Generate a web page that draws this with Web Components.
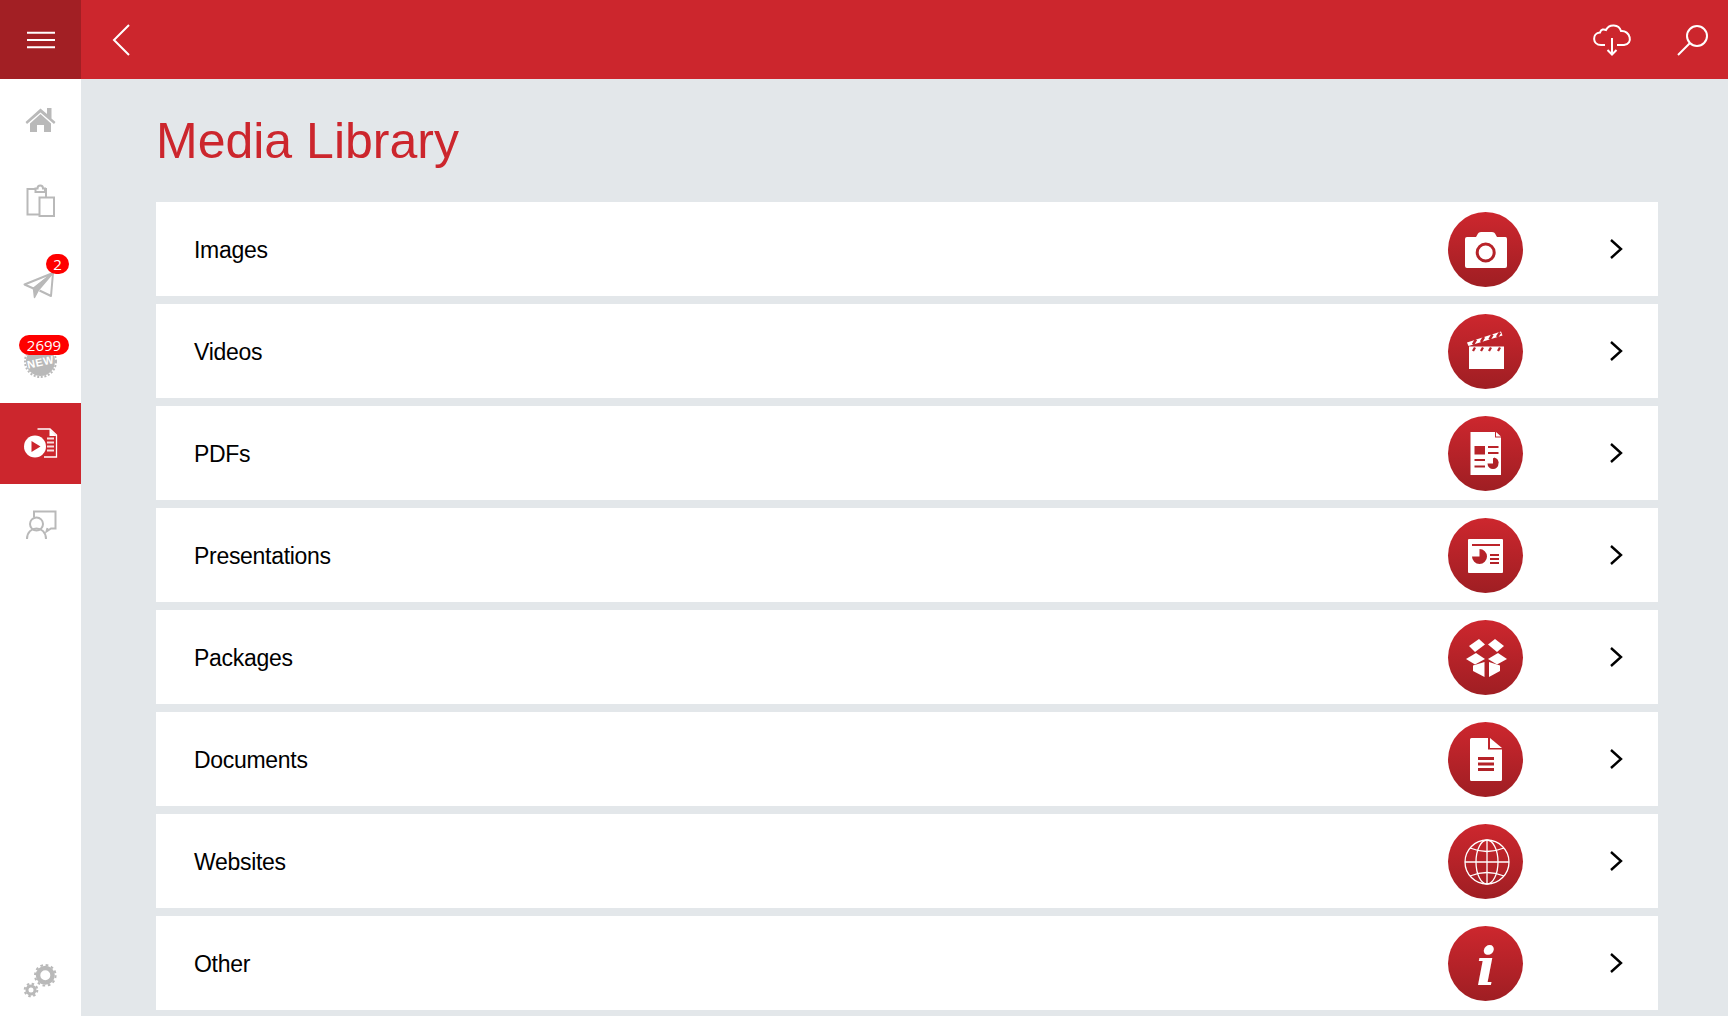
<!DOCTYPE html>
<html lang="en">
<head>
<meta charset="utf-8">
<title>Media Library</title>
<style>
  html, body { margin: 0; height: 100%; overflow: hidden; }
  body { font-family: "Liberation Sans", Arial, sans-serif; }
</style>
</head>
<body>
<svg width="0" height="0" style="position:absolute" aria-hidden="true">
  <defs>
    <linearGradient id="disc" gradientUnits="userSpaceOnUse" x1="0" y1="0" x2="0" y2="75">
      <stop offset="0" stop-color="#cd272e"/>
      <stop offset="1" stop-color="#9f1e23"/>
    </linearGradient>
  </defs>
</svg>

<app-shell>
  <top-bar slot="top"></top-bar>

  <side-nav slot="side">
    <nav-item>
      <svg viewBox="0 0 81 81" width="81" height="81" fill="currentColor">
        <path d="M40.500 29.500 47 35V29H51.500V39.500L55.500 43 54 45 40.500 33.500 27 45 25.500 43z"/>
        <path d="M40.500 35 51 44.500V53H44V46H37V53H30V44.500z"/>
      </svg>
    </nav-item>
    <nav-item>
      <svg viewBox="0 0 81 81" width="81" height="81" fill="none" stroke="currentColor" stroke-width="2">
        <path d="M35 29H27.500V54.500H39M46 37V29H45"/>
        <path d="M35.500 32V28.500H37.500C37.500 24.500 43 24.500 43 28.500H45V32z"/>
        <path d="M39.500 37.500H54V56H39.500z"/>
      </svg>
    </nav-item>
    <nav-item badge="2">
      <svg viewBox="0 0 81 81" width="81" height="81" fill="none" stroke="currentColor" stroke-width="2" stroke-linejoin="round">
        <path d="M53 32 24.500 43.500 33.500 47.500 53 32 51 55 39.500 49.500"/>
        <path fill="currentColor" stroke-width="1.500" d="M33.500 47.500 53 32 38.500 49 34.500 56.500z"/>
      </svg>
    </nav-item>
    <nav-item badge="2699">
      <svg viewBox="0 0 81 81" width="81" height="81">
        <circle cx="40.500" cy="39.500" r="14.500" fill="currentColor"/>
        <circle cx="40.500" cy="39.500" r="15.500" fill="none" stroke="currentColor" stroke-width="2" stroke-dasharray="2 1.650"/>
        <text x="40.500" y="44" transform="rotate(-12 40.500 40)" text-anchor="middle" font-family="'Liberation Sans', sans-serif" font-weight="700" font-size="11" fill="#fff" letter-spacing=".5">NEW</text>
      </svg>
    </nav-item>
    <nav-item active>
      <svg viewBox="0 0 81 81" width="81" height="81">
        <path fill="none" stroke="currentColor" stroke-width="1.300" d="M37.500 26H50L56.500 32V54H44"/>
        <path fill="currentColor" d="M49.500 26 56.500 33H49.500z"/>
        <path fill="currentColor" d="M47 34.500h7v2h-7zM47 38.500h7v2h-7zM47 42.500h7v2h-7zM47 46.500h7v2h-7z" opacity=".85"/>
        <circle cx="35" cy="43.500" r="11" fill="currentColor"/>
        <path d="M31.500 38 40.500 43.500 31.500 49z" fill="#cc262d"/>
      </svg>
    </nav-item>
    <nav-item>
      <svg viewBox="0 0 81 81" width="81" height="81" fill="none" stroke="currentColor" stroke-width="2">
        <circle cx="36.500" cy="40" r="6.500"/>
        <path d="M27 55C27 41 46 41 46 55"/>
        <path d="M34 33V27.500H55.500V44.500H51L46.500 47.500 47.500 44"/>
      </svg>
    </nav-item>
    <nav-item class="bottom">
      <svg viewBox="0 0 81 81" width="81" height="81" fill="none" stroke="currentColor">
        <circle cx="45.300" cy="40.300" r="7.250" stroke-width="4.500"/>
        <circle cx="45.300" cy="40.300" r="10.300" stroke-width="2" stroke-dasharray="2.700 2.700"/>
        <circle cx="31" cy="55" r="4" stroke-width="3"/>
        <circle cx="31" cy="55" r="6.300" stroke-width="2" stroke-dasharray="2.470 2.470"/>
      </svg>
    </nav-item>
  </side-nav>

  <media-library slot="main" heading="Media Library">
    <media-row>Images
      <svg slot="icon" viewBox="0 0 75 75" width="75" height="75">
        <path fill="#fff" d="M19 25H28L30 21.500Q30.500 20 33 20H44Q46.500 20 47 21.500L49 25H57.500Q59 25 59 27V54Q59 56 57 56H19Q17 56 17 54V27Q17 25 19 25z"/>
        <circle cx="37.700" cy="40.500" r="8.500" fill="#fff" stroke="url(#disc)" stroke-width="3"/>
      </svg>
    </media-row>
    <media-row>Videos
      <svg slot="icon" viewBox="0 0 75 75" width="75" height="75">
        <path fill="#fff" d="M21 32.500H56V55H21z"/>
        <path stroke="url(#disc)" stroke-width="2.300" d="M25 37 27 33.500M33 37 35 33.500M41 37 43 33.500M50 37 52 33.500" fill="none"/>
        <path fill="#fff" d="M19 28.500 53 17.500 54.500 21.500 20.500 32z"/>
        <path fill="none" stroke="url(#disc)" stroke-width="2.500" d="M25 30.500 28 25.500M33 28 36 23M41.500 25.500 44.500 20.500M49 23 52 18.500"/>
      </svg>
    </media-row>
    <media-row>PDFs
      <svg slot="icon" viewBox="0 0 75 75" width="75" height="75">
        <path fill="#fff" d="M22.500 16H47V21.500H53V59H22.500z"/>
        <path fill="#fff" d="M48 16 53 20.500H48z"/>
        <path fill="url(#disc)" d="M26.500 30H37V38.500H26.500zM40 30H50.500V32H40zM40 36H50.500V38H40zM26.500 43H37V45H26.500zM26.500 49.500H37V51.500H26.500z"/>
        <path fill="url(#disc)" d="M45 42A5.500 5.500 0 1 1 39.500 47.500H45z"/>
        <path fill="url(#disc)" d="M46 41.500A5.500 5.500 0 0 1 50.500 47H46z"/>
      </svg>
    </media-row>
    <media-row>Presentations
      <svg slot="icon" viewBox="0 0 75 75" width="75" height="75">
        <rect x="20" y="21" width="35" height="34" rx="1" fill="#fff"/>
        <path fill="url(#disc)" d="M24 26H52V28H24zM42 36H51V38H42zM42 40H51V42H42zM42 44H51V46H42z"/>
        <path fill="url(#disc)" d="M31.500 31A7.500 7.500 0 1 1 24 38.500H31.500z"/>
      </svg>
    </media-row>
    <media-row>Packages
      <svg slot="icon" viewBox="0 0 75 75" width="75" height="75" fill="#fff">
        <path d="M21 26 31 19 37 24.500 27 32z"/>
        <path d="M40 24.500 47 19 56 26 49 32z"/>
        <path d="M18 39 28 33 37 39 27 44.500z"/>
        <path d="M40 39 50 33 59 39 49 44.500z"/>
        <path d="M25 45.500 36.500 42V57L25 51z"/>
        <path d="M41 42 52 45.500V51L41 57z"/>
      </svg>
    </media-row>
    <media-row>Documents
      <svg slot="icon" viewBox="0 0 75 75" width="75" height="75">
        <path fill="#fff" d="M23.500 16H40V27.500H54V57.500Q54 59 52.500 59H23.500Q22 59 22 57.500V17.500Q22 16 23.500 16z"/>
        <path fill="#fff" d="M42 16 54 26H42z"/>
        <path fill="url(#disc)" d="M30 35H46V38H30zM30 40.500H46V43.500H30zM30 46H46V49H30z"/>
      </svg>
    </media-row>
    <media-row>Websites
      <svg slot="icon" viewBox="0 0 75 75" width="75" height="75" fill="none" stroke="#fff" stroke-width="1.300">
        <circle cx="39" cy="38" r="22"/>
        <ellipse cx="39" cy="38" rx="11" ry="22"/>
        <path d="M39 16V60M17 38H61"/>
        <path d="M22 24Q39 31 56 24M22 52Q39 45 56 52"/>
      </svg>
    </media-row>
    <media-row>Other
      <svg slot="icon" viewBox="0 0 75 75" width="75" height="75">
        <text x="38" y="59" text-anchor="middle" font-family="'DejaVu Serif', serif" font-style="italic" font-weight="700" font-size="52" fill="#fff">i</text>
      </svg>
    </media-row>
  </media-library>
</app-shell>

<script>
class AppShell extends HTMLElement {
  constructor() {
    super();
    this.attachShadow({ mode: "open" });
    this.shadowRoot.innerHTML = `
      <style>
        :host {
          display: grid;
          grid-template-columns: 81px 1fr;
          grid-template-rows: 79px 1fr;
          height: 100vh;
          overflow: hidden;
          background: #e3e7ea;
        }
        .top { grid-column: 1 / 3; display: block; }
      </style>
      <slot class="top" name="top"></slot>
      <slot name="side"></slot>
      <slot name="main"></slot>
    `;
  }
}

class TopBar extends HTMLElement {
  constructor() {
    super();
    this.attachShadow({ mode: "open" });
    this.shadowRoot.innerHTML = `
      <style>
        :host {
          display: flex;
          align-items: center;
          height: 79px;
          background: #cc262d;
        }
        .menu {
          display: flex;
          width: 81px;
          height: 79px;
          background: #a21f24;
        }
        .back { display: block; margin-left: 30px; }
        .spacer { flex: 1; }
        .cloud { display: block; margin-right: 43px; }
        .search { display: block; margin-right: 18px; }
        svg { fill: none; stroke: #fff; stroke-width: 2; }
      </style>
      <div class="menu">
        <svg viewBox="0 0 81 79" width="81" height="79"><path d="M27 32.700H55M27 40H55M27 47.300H55"/></svg>
      </div>
      <svg class="back" viewBox="0 0 20 34" width="20" height="34"><path d="M18 2 3 17 18 32"/></svg>
      <div class="spacer"></div>
      <svg class="cloud" viewBox="0 0 40 34" width="40" height="34">
        <path d="M12 22H8C-1 22-1 10 7 9.500 8 6 11 6 13 7 16 .5 26 1 28 8 37 7 41 21 31 22H24"/>
        <path d="M19 15V31M14.500 27 19 31.500 23.500 27"/>
      </svg>
      <svg class="search" viewBox="0 0 34 34" width="34" height="34">
        <circle cx="21" cy="13" r="10"/><path d="M14 20 2 32"/>
      </svg>
    `;
  }
}

class SideNav extends HTMLElement {
  constructor() {
    super();
    this.attachShadow({ mode: "open" });
    this.shadowRoot.innerHTML = `
      <style>
        :host {
          display: flex;
          flex-direction: column;
          height: 937px;
          background: #fff;
        }
        ::slotted(.bottom) { margin-top: auto; }
      </style>
      <slot></slot>
    `;
  }
}

class NavItem extends HTMLElement {
  constructor() {
    super();
    this.attachShadow({ mode: "open" });
    this.shadowRoot.innerHTML = `
      <style>
        :host {
          display: block;
          position: relative;
          width: 81px;
          height: 81px;
          color: #b9b9b9;
          line-height: 0;
        }
        :host([active]) { background: #cc262d; color: #fff; }
        .badge {
          position: absolute;
          top: 13px;
          right: 12px;
          width: 23px;
          height: 20px;
          border-radius: 10px;
          background: #fe0000;
          color: #fff;
          font: 15px/20px "Open Sans", "Liberation Sans", sans-serif;
          text-align: center;
        }
        .badge.wide { width: 50px; }
        .badge[hidden] { display: none; }
      </style>
      <slot></slot>
      <span class="badge" hidden></span>
    `;
  }

  connectedCallback() {
    const badge = this.shadowRoot.querySelector(".badge");
    if (this.hasAttribute("badge")) {
      const text = this.getAttribute("badge");
      badge.textContent = text;
      badge.classList.toggle("wide", text.length > 1);
      badge.hidden = false;
    }
  }
}

class MediaLibrary extends HTMLElement {
  constructor() {
    super();
    this.attachShadow({ mode: "open" });
    this.shadowRoot.innerHTML = `
      <style>
        :host {
          display: block;
          padding: 0 70px 0 75px;
        }
        h1 {
          margin: 0;
          height: 123px;
          box-sizing: border-box;
          padding-top: 33px;
          color: #cc262d;
          font: 400 50px/58px "Liberation Sans", Arial, sans-serif;
        }
        .rows {
          display: flex;
          flex-direction: column;
          gap: 8px;
        }
      </style>
      <h1></h1>
      <div class="rows"><slot></slot></div>
    `;
  }

  connectedCallback() {
    this.shadowRoot.querySelector("h1").textContent = this.getAttribute("heading");
  }
}

class MediaRow extends HTMLElement {
  constructor() {
    super();
    this.attachShadow({ mode: "open" });
    this.shadowRoot.innerHTML = `
      <style>
        :host {
          display: flex;
          align-items: center;
          height: 94px;
          padding: 0 35px 0 38px;
          background: #fff;
          color: #000;
          font: 23px "Liberation Sans", Arial, sans-serif;
          letter-spacing: -.3px;
        }
        .label { flex: 1; padding-top: 2px; }
        .disc {
          width: 75px;
          height: 75px;
          margin-right: 86px;
          border-radius: 50%;
          background: linear-gradient(#cd272e, #9f1e23);
          line-height: 0;
        }
        .chevron { fill: none; stroke: #000; stroke-width: 2.400; }
      </style>
      <div class="label"><slot></slot></div>
      <div class="disc"><slot name="icon"></slot></div>
      <svg class="chevron" viewBox="0 0 14 22" width="14" height="22"><path d="M2 2 12 11 2 20"/></svg>
    `;
  }
}

customElements.define("app-shell", AppShell);
customElements.define("top-bar", TopBar);
customElements.define("side-nav", SideNav);
customElements.define("nav-item", NavItem);
customElements.define("media-library", MediaLibrary);
customElements.define("media-row", MediaRow);
</script>
</body>
</html>
